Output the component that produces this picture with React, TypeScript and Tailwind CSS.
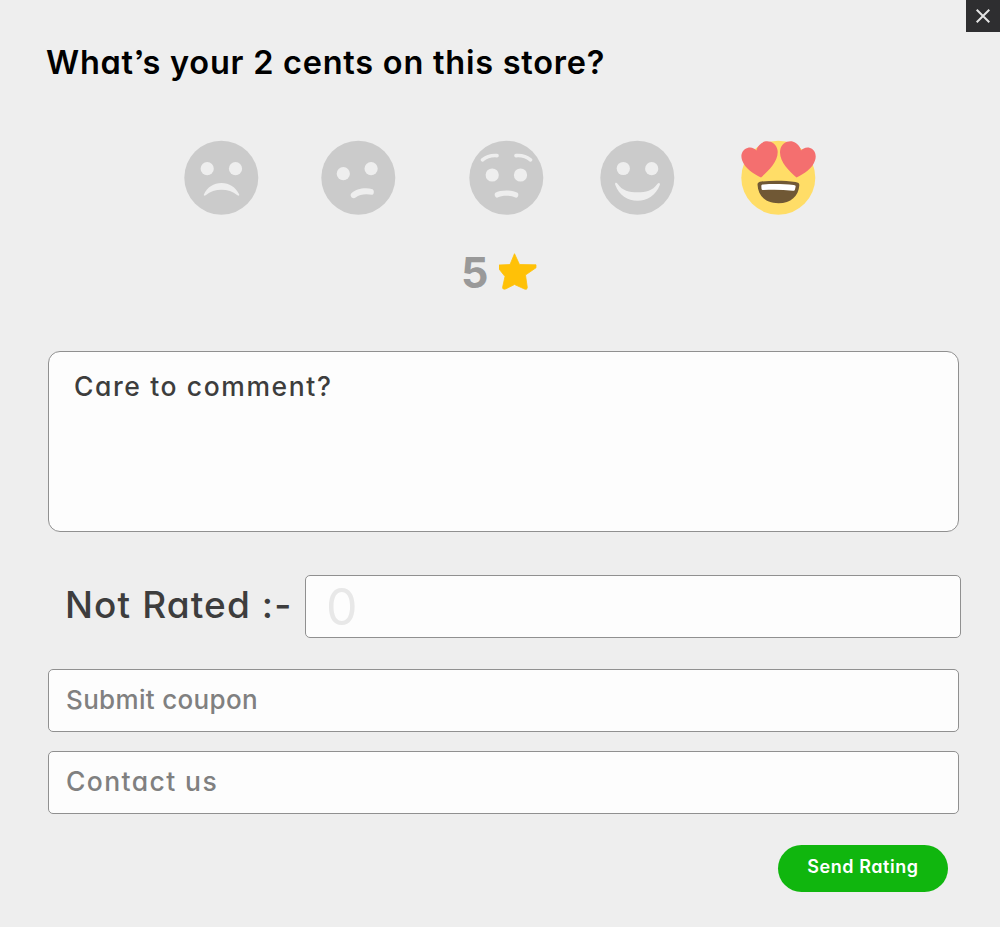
import React from "react";

const Sad = () => (
  <svg className="size-[75px]" viewBox="0 0 75 75">
    <circle cx="37.300" cy="37.700" r="37" fill="#cbcbcb" />
    <g fill="#eeeeee">
      <circle cx="23.200" cy="28.700" r="6.600" />
      <circle cx="51.500" cy="28.700" r="6.600" />
      <path d="M20 54.300C23.300 47 29.800 42.900 37.500 42.900S51.700 47 55.100 54.300C55.700 55.700 54.600 56 53.400 55.200C48.700 51.600 43.500 49.800 37.500 49.800S26.400 51.600 21.700 55.200C20.500 56 19.400 55.700 20 54.300Z" />
    </g>
  </svg>
);

const Unsure = () => (
  <svg className="size-[75px]" viewBox="0 0 75 75">
    <circle cx="37.300" cy="37.700" r="37" fill="#cbcbcb" />
    <g fill="#eeeeee">
      <circle cx="22.300" cy="33.700" r="6.600" />
      <circle cx="50.100" cy="28.700" r="6.600" />
      <path d="M30.200 53.500C35 48.800 44.500 47 51.500 49.300C53.600 50 53.100 55.200 50.900 54.700C45 53.600 38.700 54.100 34.600 57.500C31.600 59.600 28.300 56 30.200 53.500Z" />
    </g>
  </svg>
);

const Worried = () => (
  <svg className="size-[75px]" viewBox="0 0 75 75">
    <circle cx="37.300" cy="37.700" r="37" fill="#cbcbcb" />
    <g fill="#eeeeee">
      <circle cx="23.200" cy="35" r="6.600" />
      <circle cx="51.500" cy="35" r="6.600" />
      <path d="M26.400 52.800C31.200 49.700 43.500 49.700 48.500 52.800C50.500 54.200 48.700 58.600 46.500 57.500C41 55.200 33.500 55.200 28.500 57.500C26.300 58.600 24.600 54.200 26.400 52.800Z" />
    </g>
    <path d="M13.500 19.800C17.500 16.400 22.500 15.200 28 15.600M47 15.600C52.500 15.200 57.500 16.400 61.500 19.800" fill="none" stroke="#eeeeee" strokeWidth="3.600" strokeLinecap="round" />
  </svg>
);

const Happy = () => (
  <svg className="size-[75px]" viewBox="0 0 75 75">
    <circle cx="37.300" cy="37.700" r="37" fill="#cbcbcb" />
    <g fill="#eeeeee">
      <circle cx="23.300" cy="28.500" r="6.600" />
      <circle cx="51.700" cy="28.700" r="6.600" />
      <path d="M15.200 44.700C14.500 42.600 16.600 42.200 17.700 43.900C22.500 50.600 29 52.300 37.500 52.300S52.500 50.600 57.300 43.900C58.500 42.200 60.600 42.700 59.800 44.900C55.800 55.300 47.500 60.700 37.500 60.700S19.200 55.200 15.200 44.700Z" />
    </g>
  </svg>
);

const Love = () => (
  <svg className="size-[75px]" viewBox="0 0 75 75">
    <circle cx="37.300" cy="37.700" r="37" fill="#ffdd67" />
    <path d="M36.500 10C35 2.500 26.500-.9 20.800 3C17 5.500 15.700 8.500 15.400 10.500C13.500 8.500 10.500 6.800 6.500 7.900C.9 9.500-.8 15.500 1.200 20.500C4 28.300 12 33.500 20 37.500C28 30.500 38.200 20.500 36.500 10Z" fill="#f46f6f" />
    <path d="M39.200 10C40.500 2.500 49-.9 54.800 3C58.500 5.500 59.600 8.500 60 10.500C62 8.500 65 6.800 69 7.900C74.200 9.500 75.800 15.500 74 20.500C71.500 28.300 63.500 33.500 55.500 37.500C47.500 30.500 37.500 20.500 39.200 10Z" fill="#f46f6f" />
    <path d="M16.500 44.500C16.500 42.600 18 41.900 20.500 41.500C31 40.500 44 40.500 54.500 42C57.500 42.500 58.500 43.400 58.300 45.500C57.500 56.200 50 63.200 37.500 63.200S17 56.200 16.500 44.500Z" fill="#705835" />
    <path d="M20.300 45.800C20.300 44.700 21.300 44.500 22.300 44.400C32 43.700 43 43.900 52.700 45C54.300 45.200 54.800 45.700 54.600 46.800L54 49.600C53.700 50.800 53 50.900 51.800 50.800C42 49.700 32 49.600 22.500 50.100C21.300 50.200 20.600 49.900 20.500 48.800Z" fill="#fff" />
  </svg>
);

const faces = [
  { name: "Sad", Face: Sad, gap: "" },
  { name: "Unsure", Face: Unsure, gap: "ml-[62px]" },
  { name: "Worried", Face: Worried, gap: "ml-[73px]" },
  { name: "Happy", Face: Happy, gap: "ml-[56px]" },
  { name: "Love it", Face: Love, gap: "ml-[66px]" },
];

const field =
  "block rounded-[5px] border border-[#909090] bg-[#fdfdfd] font-medium outline-none placeholder:opacity-100";

export default function App() {
  return (
    <main className="relative flex h-[927px] w-[1000px] flex-col overflow-hidden bg-[#eeeeee] pl-12 font-['Inter',sans-serif] [font-feature-settings:'cv11','ss03']">
      <button
        aria-label="Close"
        className="absolute top-0 right-0 flex h-8 w-[34px] items-center justify-center bg-[#2e2e30]"
      >
        <svg className="size-[14px]" viewBox="0 0 14 14" stroke="#e4e4e4" strokeWidth="2">
          <path d="M.7.700 13.300 13.300M13.300.700.700 13.300" />
        </svg>
      </button>

      <h1 className="mt-[43px] -ml-[2px] h-10 text-[32.500px] leading-10 font-semibold tracking-[0.750px] whitespace-nowrap text-black">
        What’s your 2 cents on this store?
      </h1>

      <div className="mt-[57px] ml-[136px] flex h-[75px]">
        {faces.map(({ name, Face, gap }) => (
          <button key={name} aria-label={name} className={gap}>
            <Face />
          </button>
        ))}
      </div>

      <div className="mt-[32px] ml-[413px] flex h-[50px] items-center">
        <span className="w-[38px] text-[43px] leading-[50px] font-bold text-[#999999]">5</span>
        <svg className="h-[38px] w-[38px]" viewBox="0 0 38 38">
          <path
            d="M15.500 1.200 20.500 12 37 12.300V15.300L26.500 22.500 28.300 35C28.200 36.800 27 37.300 25 36.300L15.500 32 7 36.300C4.800 37.300 3.200 36.500 3.700 34.300L6 24 0 16.500V12.500L11 12Z"
            transform="translate(0 -.5)"
            fill="#ffc107"
            stroke="#ffc107"
            strokeWidth=".8"
            strokeLinejoin="round"
          />
        </svg>
      </div>

      <textarea
        placeholder="Care to comment?"
        className="mt-[54px] block h-[181px] w-[911px] resize-none rounded-xl border border-[#909090] bg-[#fdfdfd] px-[25px] pt-[14px] text-[26.500px] leading-10 font-medium tracking-[1.600px] outline-none placeholder:text-[#3d3d3d] placeholder:opacity-100"
      />

      <div className="mt-[43px] flex h-[63px]">
        <label
          htmlFor="rate"
          className="w-[257px] pl-[17px] text-[37px] leading-[60px] font-medium tracking-[1.100px] whitespace-nowrap text-[#3d3d3d]"
        >
          Not Rated :-
        </label>
        <input
          id="rate"
          placeholder="0"
          className="block h-[63px] w-[656px] rounded-[5px] border border-[#909090] bg-[#fdfdfd] pt-[2px] pl-5 text-[50px] font-normal outline-none placeholder:text-[#e8e8e8] placeholder:opacity-100"
        />
      </div>

      <input
        placeholder="Submit coupon"
        className={`${field} mt-[31px] h-[63px] w-[911px] pb-[2px] pl-[17px] text-[26px] tracking-[0.330px] placeholder:text-[#808080]`}
      />
      <input
        placeholder="Contact us"
        className={`${field} mt-[19px] h-[63px] w-[911px] pb-[4px] pl-[17px] text-[26.500px] tracking-[1.400px] placeholder:text-[#808080]`}
      />

      <button className="mt-[31px] ml-[730px] flex h-[47px] w-[170px] justify-center rounded-full bg-[#10b60e] text-[18px] leading-[43px] font-semibold tracking-[0.550px] whitespace-nowrap text-white">
        Send Rating
      </button>
    </main>
  );
}
